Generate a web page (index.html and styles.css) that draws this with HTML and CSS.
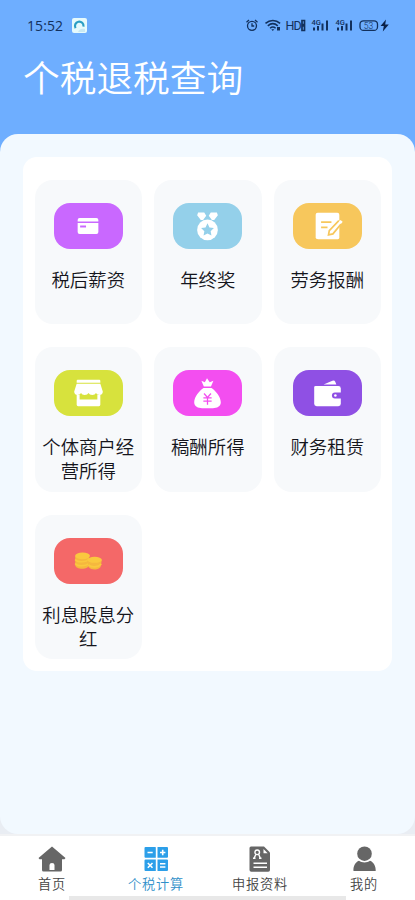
FILE: index.html
```html
<!DOCTYPE html>
<html lang="zh-CN">
<head>
<meta charset="utf-8">
<meta name="viewport" content="width=device-width, initial-scale=1">
<title>个税退税查询</title>
<link rel="stylesheet" href="styles.css">
</head>
<body>
<div class="app">
  <div class="status">
    <span class="time">15:52</span>
    <svg class="app-ico" width="15" height="15" viewBox="0 0 15 15"><rect width="15" height="15" rx="2" fill="#e6fafc"/><path d="M3.6 10.2A4.3 4.3 0 1 1 11.5 8.6" fill="none" stroke="#2b9fc4" stroke-width="2.2"/><path d="M6 14c1-3 4-4 7-3v3z" fill="#c9e9f3"/></svg>
    <svg class="sys" width="146" height="18" viewBox="0 0 146 18" fill="none" stroke="#12305c" stroke-width="1.3">
      <circle cx="7" cy="9.8" r="4.5"/><path d="M7 7.2v2.8h2.2M1.5 6.2 4 4M12.5 6.2 10 4"/>
      <path d="M20.5 7.4c4.4-4 10.4-4 14.6 0M22.8 9.9c3.1-2.8 6.9-2.8 10 0M25 12.2c1.9-1.6 3.8-1.6 5.6 0" stroke-width="1.5"/><path d="M26.3 13.3h3l-1.5 1.7zM32 11h3v3.5h-3z" fill="#12305c" stroke="none"/>
      <text x="40.5" y="13.7" class="hd">HD</text>
      <path d="M57 4.500h2.500v4H57zM57 10h2.500v4.500H57z" stroke-width="1.700"/>
      <text x="66.5" y="8.5" class="g">4G</text>
      <path d="M69 14.5v-3M73 14.5V10M77.500 14.500V7.500M82 14.500V4.500" stroke-width="2"/>
      <text x="90.5" y="8.5" class="g">4G</text>
      <path d="M93 14.5v-3M97 14.5V10M101.500 14.500V7.500M106 14.500V4.500" stroke-width="2"/>
      <rect x="115" y="4.800" width="17.500" height="9.600" rx="3.500"/><text x="118.800" y="12.600" class="b">53</text>
      <path d="M141 3.500l-5.500 6.500h3.300l-1 5.500 6-7h-3.600z" fill="#0b2148" stroke="none"/>
    </svg>
  </div>
  <h1 class="title">个税退税查询</h1>
  <main class="panel">
    <div class="card">
      <div class="tile"><div class="badge salary"><svg viewBox="0 0 70 46"><path d="M26 15h17q2 0 2 2v1.500H24V17q0-2 2-2zM24 20h21v9q0 2-2 2H26q-2 0-2-2z" fill="#fff"/><path d="M26.500 22.500h6v2h-6z" fill="#c968ff"/></svg></div><p>税后薪资</p></div>
      <div class="tile"><div class="badge bonus"><svg viewBox="0 0 70 46"><path d="M25.500 9.300h6.200l2 3.200-3.200 4.500h-2.300l-3.700-5zM38.300 9.300h6.200l1 2.700-3.700 5h-2.300L36.300 12.500z" fill="#fff"/><circle cx="35" cy="27" r="10.500" fill="#fff"/><path d="M35 20.300l2 4.100 4.500.6-3.300 3.200.8 4.500-4-2.100-4 2.100.8-4.500-3.300-3.200 4.500-.6z" fill="#94d0ea"/></svg></div><p>年终奖</p></div>
      <div class="tile"><div class="badge labor"><svg viewBox="0 0 70 46"><path d="M25 9.500h20q2 0 2 2V35q0 1.500-1.500 1.500h-20Q23 36.500 23 35V11.500q0-2 2-2z" fill="#fff"/><path d="M28.500 19h10.500M28.500 24.500h6.500" stroke="#f7c75c" stroke-width="1.800"/><path d="M50 19.500 40.500 31 36 32l.8-4.200L46.500 17.500" fill="#fff" stroke="#f7c75c" stroke-width="1.700"/><path d="M47.300 18l2.200 1.800" stroke="#fff" stroke-width="2.800"/></svg></div><p>劳务报酬</p></div>
      <div class="tile"><div class="badge shop"><svg viewBox="0 0 70 46"><path d="M24 9.500h22q1 0 1 1.200v1.800H23v-1.800q0-1.200 1-1.200zM23 13.500h24l2.500 8q0 3.500-3.300 3.500-2.600 0-3.600-2-1 2-3.800 2T35 23q-1 2-3.800 2t-3.800-2q-1 2-3.600 2-3.300 0-3.300-3.500z" fill="#fff"/><path d="M23 25v10q0 1.500 1.500 1.500h21q1.500 0 1.500-1.500V25h-3v4.500H26V25z" fill="#fff"/></svg></div><p>个体商户经营所得</p></div>
      <div class="tile"><div class="badge fee"><svg viewBox="0 0 70 46"><path d="M28.800 10.500l3.500 1.500L34.500 8l2.800 4 3.700-1.500-2.500 6h-7.200zM31 18h8c4 2.500 9.500 9 9.500 14.500 0 4.500-4 6-8 6h-11c-4 0-8-1.500-8-6C21.500 27 27 20.500 31 18z" fill="#fff"/><path d="M31.500 23.500l3.500 4 3.500-4M30.800 28h8.400M30.800 31.300h8.400M35 27.500v7.500" fill="none" stroke="#f34ef0" stroke-width="1.300"/></svg></div><p>稿酬所得</p></div>
      <div class="tile"><div class="badge lease"><svg viewBox="0 0 70 46"><path d="M31 14.500l9-4q2-.8 2.800 1l1.200 3z" fill="#fff"/><path d="M23 16h23q2.500 0 2.500 2.500V34q0 2.500-2.500 2.500H24q-2.500 0-2.500-2.500V17q0-1 1.500-1z" fill="#fff"/><path d="M49 22.500h-6.500a3 3 0 0 0 0 6H49z" fill="#8f50e4"/><circle cx="43" cy="25.500" r="1.300" fill="#fff"/></svg></div><p>财务租赁</p></div>
      <div class="tile"><div class="badge interest"><svg viewBox="0 0 70 46"><path d="M21.500 18v9c0 5 14 5 14 0v-9z" fill="#f5b83e"/><ellipse cx="29" cy="17.800" rx="7.500" ry="3.300" fill="#fac83f"/><path d="M21.500 21.500c2 3 11 3 14 0M21.500 25.500c2 3 11 3 14 0" fill="none" stroke="#fac83f" stroke-width="1.600"/><path d="M34 22l1 7c3 4 12 3 12.500-1l1-6z" fill="#f5b83e"/><ellipse cx="41.200" cy="21.800" rx="7.300" ry="3" fill="#fac83f"/><path d="M35 27c3 3 10 2.500 13-1" fill="none" stroke="#fac83f" stroke-width="1.800"/></svg></div><p>利息股息分红</p></div>
    </div>
  </main>
  <nav class="tabs">
    <a class="tab"><svg width="28" height="28" viewBox="0 0 28 28"><path d="M14 1.500 27.500 13l-1 1.300H24V25q0 1.500-1.500 1.500h-17Q4 26.500 4 25V14.300H1.500L.5 13z" fill="#666"/><path d="M11.500 25V20q0-2 2.500-2t2.500 2v5z" fill="#fff"/></svg><span>首页</span></a>
    <a class="tab active"><svg width="28" height="28" viewBox="0 0 28 28"><path d="M3.500 2h9.800q.5 0 .5.500v10.300H3.500q-1 0-1-1V3q0-1 1-1zM15.500 2h9.500q1 0 1 1v8.800q0 1-1 1h-9.500zM3.500 14.500h10.300V26H3.500q-1 0-1-1v-9.500q0-1 1-1zM15.500 14.500H25q1 0 1 1V25q0 1-1 1h-9.500z" fill="#2c9fe9"/><path d="M5.500 7.500h5.200M18 7.500h5.400M20.700 4.800v5.400M5.800 18l4.700 4.700M10.500 18l-4.700 4.700M18 18.800h5.400M18 22h5.400" stroke="#fff" stroke-width="1.600"/></svg><span>个税计算</span></a>
    <a class="tab"><svg width="28" height="28" viewBox="0 0 28 28"><path d="M5 1.500h13l6 6V25q0 1.800-1.800 1.800H5.300Q3.500 26.800 3.500 25V3q0-1.500 1.500-1.500z" fill="#666"/><path d="M17.500 4v4.200h4.200z" fill="#fff"/><circle cx="11.200" cy="7.300" r="2.300" fill="none" stroke="#fff" stroke-width="1.400"/><path d="M8 13.500 9.800 9.500M14.500 13.500 12.700 9.500M7 13.300h2.500M13 13.300h2.500M7.500 18.300h13.500M7.500 22.300h13.500" fill="none" stroke="#fff" stroke-width="1.400"/></svg><span>申报资料</span></a>
    <a class="tab"><svg width="28" height="28" viewBox="0 0 28 28"><circle cx="14.500" cy="8.700" r="7.300" fill="#666"/><path d="M3.500 26c-.5-5 2-9 5.500-10.300 3 2.300 8 2.300 11 0C23.500 17 26 21 25.700 26z" fill="#666"/></svg><span>我的</span></a>
  </nav>
  <div class="home-bar"></div>
</div>
</body>
</html>
```
FILE: styles.css
```css
* { box-sizing: border-box; }

body {
  margin: 0;
  font-family: "Noto Sans CJK SC", sans-serif;
  font-weight: 350;
  color: #15151c;
}

.app {
  position: relative;
  display: flex;
  flex-direction: column;
  width: 415px;
  height: 900px;
  overflow: hidden;
  background: linear-gradient(#6eaeff 0 400px, #e9edf3 400px);
}

.status {
  display: flex;
  align-items: center;
  height: 50px;
  padding: 0 24px 0 27px;
  flex: none;
}

.time {
  width: 45px;
  padding-top: 1px;
  font: 14px/20px "Open Sans", sans-serif;
  letter-spacing: .1px;
  color: #12305c;
}

.sys { margin-left: auto; }
.sys text { fill: #12305c; stroke: none; font-family: Roboto, sans-serif; }
.sys .hd { font-size: 12.5px; font-weight: 400; letter-spacing: -.8px; }
.sys .g { font-size: 7.5px; font-weight: 500; }
.sys .b { font-size: 8.5px; }

.title {
  margin: -1px 0 0;
  height: 85px;
  padding-left: 23px;
  font-size: 36.7px;
  line-height: 55px;
  font-weight: 350;
  color: #fff;
  flex: none;
}

.panel {
  height: 700px;
  padding: 23px;
  border-radius: 18px;
  background: #f2f9ff;
  flex: none;
}

.card {
  display: grid;
  grid-template-columns: repeat(3, 107.5px);
  grid-auto-rows: 144.3px;
  gap: 23px 12px;
  height: 513.5px;
  padding: 23px 11.5px;
  border-radius: 14px;
  background: #fff;
}

.tile {
  display: flex;
  flex-direction: column;
  align-items: center;
  padding: 23px 7px 0;
  border-radius: 18px;
  background: #f7f9fb;
}

.tile p {
  margin: 18px 0 0;
  font-size: 18.4px;
  line-height: 24px;
  text-align: center;
}

.badge {
  width: 69px;
  height: 46px;
  border-radius: 16px;
  flex: none;
}

.badge svg { display: block; width: 69px; height: 46px; }

.salary { background: #c968ff; }
.bonus { background: #94d0ea; }
.labor { background: #f7c75c; }
.shop { background: #d7e23d; }
.fee { background: #f34ef0; }
.lease { background: #8f50e4; }
.interest { background: #f46868; }

.tabs {
  display: grid;
  grid-template-columns: repeat(4, 104px);
  height: 66px;
  padding-top: 9px;
  border-top: 2px solid #f1f2f4;
  background: #fff;
  flex: none;
}

.tab {
  display: flex;
  flex-direction: column;
  align-items: center;
  font-size: 13.2px;
  line-height: 20px;
  letter-spacing: .8px;
  color: #444;
}

.tab svg { flex: none; }
.tab span { margin-top: .5px; }
.active { color: #2f8fc9; }

.home-bar {
  position: absolute;
  left: 69px;
  bottom: 0;
  width: 277px;
  height: 4px;
  background: #e8e8e8;
}
```
